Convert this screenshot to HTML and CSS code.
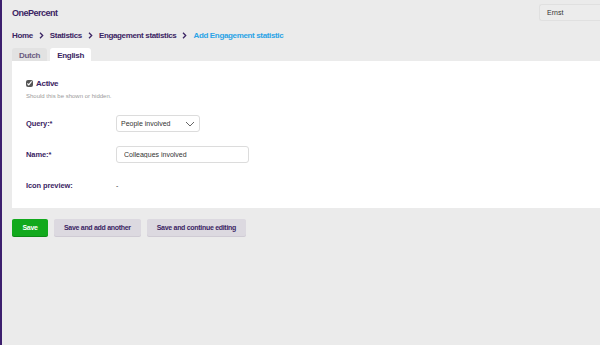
FILE: index.html
```html
<!DOCTYPE html>
<html lang="en">
<head>
  <meta charset="UTF-8">
  <title>Add Engagement statistic | OnePercent</title>
  <link rel="stylesheet" href="styles.css">
</head>
<body>
  <div class="page">
    <header class="top">
      <div class="brand">OnePercent</div>
      <div class="user">Ernst</div>
    </header>

    <!-- Breadcrumbs -->
    <nav class="crumbs">
      <a href="#">Home</a>
      <svg class="sep" width="5" height="7" viewBox="0 0 5 7"><path d="M1 0.8l2.7 2.7-2.7 2.7" fill="none" stroke="#3b2463" stroke-width="1.3"/></svg>
      <a href="#">Statistics</a>
      <svg class="sep" width="5" height="7" viewBox="0 0 5 7"><path d="M1 0.8l2.7 2.7-2.7 2.7" fill="none" stroke="#3b2463" stroke-width="1.3"/></svg>
      <a href="#">Engagement statistics</a>
      <svg class="sep" width="5" height="7" viewBox="0 0 5 7"><path d="M1 0.8l2.7 2.7-2.7 2.7" fill="none" stroke="#3b2463" stroke-width="1.3"/></svg>
      <span class="current">Add Engagement statistic</span>
    </nav>

    <div class="tabs">
      <div class="tab">Dutch</div>
      <div class="tab active">English</div>
    </div>

    <form class="card">
      <div class="check-row">
        <label class="check"><input type="checkbox" checked> Active</label>
        <div class="help">Should this be shown or hidden.</div>
      </div>

      <div class="field">
        <label class="label">Query:*</label>
        <div class="select">
          <span>People involved</span>
          <svg width="10" height="6" viewBox="0 0 10 6"><path d="M1 1l4 4 4-4" fill="none" stroke="#666" stroke-width="1"/></svg>
        </div>
      </div>

      <div class="field">
        <label class="label">Name:*</label>
        <input class="input" type="text" value="Colleagues involved">
      </div>

      <div class="field">
        <label class="label">Icon preview:</label>
        <span class="preview">-</span>
      </div>
    </form>

    <div class="actions">
      <button class="btn btn-save">Save</button>
      <button class="btn">Save and add another</button>
      <button class="btn">Save and continue editing</button>
    </div>
  </div>
</body>
</html>
```

FILE: styles.css
```css
* {
  margin: 0;
  padding: 0;
  box-sizing: border-box;
}
html, body {
  height: 100%;
  background: #ebebeb;
  overflow: hidden;
}
body {
  font-family: "Liberation Sans", Arial, sans-serif;
  color: #3b2463;
  border-left: 2px solid #3d1f6e;
}

.page {
  padding: 0 0 0 10px;
}

.top {
  display: flex;
  justify-content: space-between;
  align-items: flex-start;
  height: 24px;
}
.brand {
  font-size: 9px;
  font-weight: bold;
  letter-spacing: -0.5px;
  padding-top: 8px;
}
.user {
  margin-top: 4px;
  width: 61px;
  height: 17px;
  border: 1px solid #e0e0e0;
  border-right: none;
  border-radius: 3px 0 0 3px;
  background: #ececec;
  font-size: 7px;
  color: #333;
  padding: 4px 0 0 7px;
}

/* Breadcrumbs */
.crumbs {
  display: flex;
  align-items: center;
  font-size: 8px;
  font-weight: bold;
  letter-spacing: -0.35px;
  height: 21px;
  padding-top: 1px;
}
.crumbs a {
  color: #3b2463;
  text-decoration: none;
}
.crumbs .sep {
  margin: 1px 6px 0 6px;
}
.crumbs .current {
  color: #2aa3e6;
}

/* Language tabs */
.tabs {
  display: flex;
  gap: 3px;
  margin-top: 3px;
}
.tab {
  font-size: 8px;
  font-weight: bold;
  letter-spacing: -0.3px;
  color: #6b5c80;
  background: #e2e2e2;
  padding: 3px 7px 0;
  height: 13px;
  border-radius: 3px 3px 0 0;
}
.tab.active {
  background: #fff;
  color: #3b2463;
}

.card {
  background: #fff;
  height: 147px;
  padding: 18px 0 0 14px;
}

.check-row {
  margin-bottom: 16px;
}
.check {
  display: flex;
  align-items: center;
  gap: 3px;
  font-size: 8px;
  font-weight: bold;
  letter-spacing: -0.3px;
}
.check input {
  width: 7px;
  height: 7px;
  margin: 0;
  accent-color: #555;
}
.help {
  font-size: 6px;
  color: #9a9a9a;
  margin-top: 5px;
}

.field {
  display: flex;
  align-items: center;
  height: 17px;
  margin-bottom: 14px;
}
.label {
  width: 90px;
  font-size: 7.5px;
  font-weight: bold;
  letter-spacing: -0.1px;
}
.select {
  width: 84px;
  height: 17px;
  border: 1px solid #dcdcdc;
  border-radius: 3px;
  font-size: 7px;
  color: #333;
  display: flex;
  align-items: center;
  justify-content: space-between;
  padding: 0 4px;
}
.input {
  width: 133px;
  height: 17px;
  border: 1px solid #dcdcdc;
  border-radius: 3px;
  font-family: inherit;
  font-size: 7px;
  color: #333;
  padding: 0 7px;
  outline: none;
}
.preview {
  font-size: 7px;
  color: #333;
}

/* Submit row */
.actions {
  display: flex;
  gap: 6px;
  margin-top: 11px;
}
.btn {
  font-family: inherit;
  font-size: 7px;
  font-weight: bold;
  letter-spacing: -0.3px;
  color: #3b2463;
  background: #dcd9e0;
  border: none;
  border-radius: 2px;
  height: 17px;
  padding: 0 10px;
  box-shadow: 0 1px 0 #cfcbd4;
}
.btn-save {
  background: #12a91d;
  color: #fff;
  width: 36px;
  padding: 0;
  box-shadow: 0 1px 0 #0d8a16;
}
```
